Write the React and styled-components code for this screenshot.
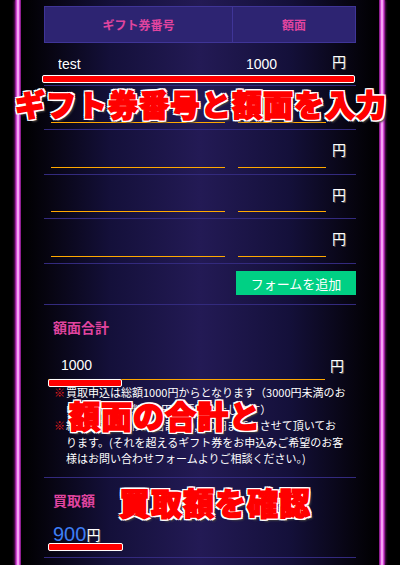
import React from "react";
import styled, { createGlobalStyle } from "styled-components";

const pink = "#e0449f";
const line = "#332a7e";
const orange = "#ffa800";

const GlobalStyle = createGlobalStyle`
  html, body {
    margin: 0;
    padding: 0;
    background: #000;
    overflow: hidden;
  }
  * {
    box-sizing: border-box;
  }
`;

const Page = styled.div`
  width: 400px;
  height: 565px;
  display: flex;
  padding: 0 15px;
  background: #000;
  font-family: "Liberation Sans", "Noto Sans CJK JP", sans-serif;
  color: #fff;
`;

const Rail = styled.div`
  flex: 0 0 6px;
  background: linear-gradient(90deg, #6e0c72, #e04fe0 28%, #ffd4ff 50%, #e04fe0 72%, #6e0c72);
  box-shadow: 0 0 3px #b81cb8;
`;

const Frame = styled.div`
  position: relative;
  flex: 1;
  padding: 6px 23px 0;
  background: linear-gradient(90deg, #000 0%, #06040f 7%, #14103a 25%, #231a55 50%, #14103a 75%, #06040f 93%, #000 100%);
`;

const HeadRow = styled.div`
  display: grid;
  grid-template-columns: 187px 1fr;
  height: 37px;
  background: #2d2472;
  border: 1px solid #3f3597;
`;

const HeadCell = styled.div`
  display: flex;
  align-items: center;
  justify-content: center;
  color: ${pink};
  font-family: "Noto Sans CJK JP", sans-serif;
  font-size: 12px;
  font-weight: 700;
  border-left: ${(p) => (p.$divider ? "1px solid #3f3597" : "none")};
`;

const Row = styled.div`
  display: flex;
  align-items: flex-end;
  height: ${(p) => p.$height}px;
  padding: 0 7px 6px;
  border-bottom: 1px solid ${line};
`;

const Field = styled.div`
  width: ${(p) => p.$width}px;
  height: 30px;
  margin-left: ${(p) => p.$gap || 0}px;
  border-bottom: 1px solid ${orange};
`;

const Input = styled.input`
  display: block;
  width: 100%;
  height: 29px;
  padding: 0 0 0 ${(p) => p.$indent || 7}px;
  background: transparent;
  border: none;
  outline: none;
  color: #fff;
  font-family: "Liberation Sans", sans-serif;
  font-size: 14px;
`;

const Yen = styled.span`
  align-self: center;
  margin-left: ${(p) => p.$gap || 0}px;
  font-family: "Noto Sans CJK JP", sans-serif;
  font-size: 14px;
  color: #fff;
  text-shadow: 1px 1px 0 #555;
`;

const ButtonRow = styled.div`
  display: flex;
  justify-content: flex-end;
  padding: 7px 0 9px;
  border-bottom: 1px solid ${line};
`;

const AddButton = styled.button`
  width: 120px;
  height: 24px;
  border: none;
  border-radius: 0;
  background: #00d084;
  color: #fff;
  font-family: "Noto Sans CJK JP", sans-serif;
  font-size: 13px;
`;

const Section = styled.div`
  display: flex;
  flex-direction: column;
  padding: ${(p) => p.$pad};
  border-bottom: 1px solid ${line};
`;

const Label = styled.div`
  padding-left: 5px;
  line-height: 20px;
  color: ${pink};
  font-family: "Noto Sans CJK JP", sans-serif;
  font-size: 14px;
  font-weight: 700;
`;

const TotalRow = styled.div`
  display: flex;
  align-items: center;
  margin-top: 13px;
`;

const Notes = styled.div`
  margin-top: 4px;
  padding-left: 6px;
  font-family: "Noto Sans CJK JP", sans-serif;
  font-size: 11px;
  line-height: 16.5px;
`;

const Note = styled.div`
  display: flex;
`;

const Mark = styled.span`
  flex: 0 0 12px;
  color: #e01c1c;
`;

const PriceLine = styled.div`
  display: flex;
  align-items: baseline;
  margin-top: 10px;
  padding-left: 5px;
  line-height: 28px;
`;

const Price = styled.span`
  color: #3d7ef5;
  font-family: "Liberation Sans", sans-serif;
  font-size: 20px;
`;

const Marker = styled.div`
  position: absolute;
  left: ${(p) => p.$x}px;
  top: ${(p) => p.$y}px;
  width: ${(p) => p.$w}px;
  height: 8px;
  background: #f00;
  border: 1.5px solid #fff;
  border-radius: 2px;
  box-shadow: 0 0 1px #333;
`;

const Callout = styled.div`
  position: absolute;
  left: ${(p) => p.$x}px;
  top: ${(p) => p.$y}px;
  white-space: nowrap;
  font-family: "Noto Sans CJK JP", sans-serif;
  font-size: ${(p) => p.$size}px;
  font-weight: 900;
  line-height: 1;
  letter-spacing: ${(p) => p.$spacing}px;
  color: #f00;
  -webkit-text-stroke: 1.5px #f00;
  text-shadow:
    2px 0 0 #fff, -2px 0 0 #fff, 0 2px 0 #fff, 0 -2px 0 #fff,
    2px 2px 0 #fff, -2px -2px 0 #fff, 2px -2px 0 #fff, -2px 2px 0 #fff,
    3px 3px 2px #444;
`;

const rows = [
  { code: "test", amount: "1000", height: 43 },
  { code: "", amount: "", height: 44 },
  { code: "", amount: "", height: 45 },
  { code: "", amount: "", height: 44 },
  { code: "", amount: "", height: 45 },
];

const App = () => {
  return (
    <>
      <GlobalStyle />
      <Page>
        <Rail />
        <Frame>
          <HeadRow>
            <HeadCell>ギフト券番号</HeadCell>
            <HeadCell $divider>額面</HeadCell>
          </HeadRow>
          {rows.map((item, index) => (
            <Row key={index} $height={item.height}>
              <Field $width={174}>
                <Input defaultValue={item.code} />
              </Field>
              <Field $width={88} $gap={13}>
                <Input $indent={8} defaultValue={item.amount} />
              </Field>
              <Yen $gap={6}>円</Yen>
            </Row>
          ))}
          <ButtonRow>
            <AddButton>フォームを追加</AddButton>
          </ButtonRow>

          <Section $pad="12px 10px 10px 4px">
            <Label>額面合計</Label>
            <TotalRow>
              <Field $width={277}>
                <Input $indent={13} defaultValue="1000" />
              </Field>
              <Yen $gap={5}>円</Yen>
            </TotalRow>
            <Notes>
              <Note>
                <Mark>※</Mark>
                <span>
                  買取申込は総額1000円からとなります（3000円未満のお申込みは手数料300円を頂戴いたします）
                </span>
              </Note>
              <Note>
                <Mark>※</Mark>
                <span>
                  総額の買取上限は合計100,000円までとさせて頂いております。(それを超えるギフト券をお申込みご希望のお客様はお問い合わせフォームよりご相談ください。)
                </span>
              </Note>
            </Notes>
          </Section>

          <Section $pad="12px 10px 9px 4px">
            <Label>買取額</Label>
            <PriceLine>
              <Price>900</Price>
              <Yen>円</Yen>
            </PriceLine>
          </Section>

          <Marker $x={21} $y={75} $w={313} />
          <Marker $x={27} $y={379} $w={74} />
          <Marker $x={27} $y={543} $w={75} />

          <Callout $x={-6} $y={88} $size={30} $spacing={1}>
            ギフト券番号と額面を入力
          </Callout>
          <Callout $x={48} $y={399} $size={31} $spacing={1}>
            額面の合計と
          </Callout>
          <Callout $x={98} $y={486} $size={31} $spacing={1}>
            買取額を確認
          </Callout>
        </Frame>
        <Rail />
      </Page>
    </>
  );
};

export default App;
